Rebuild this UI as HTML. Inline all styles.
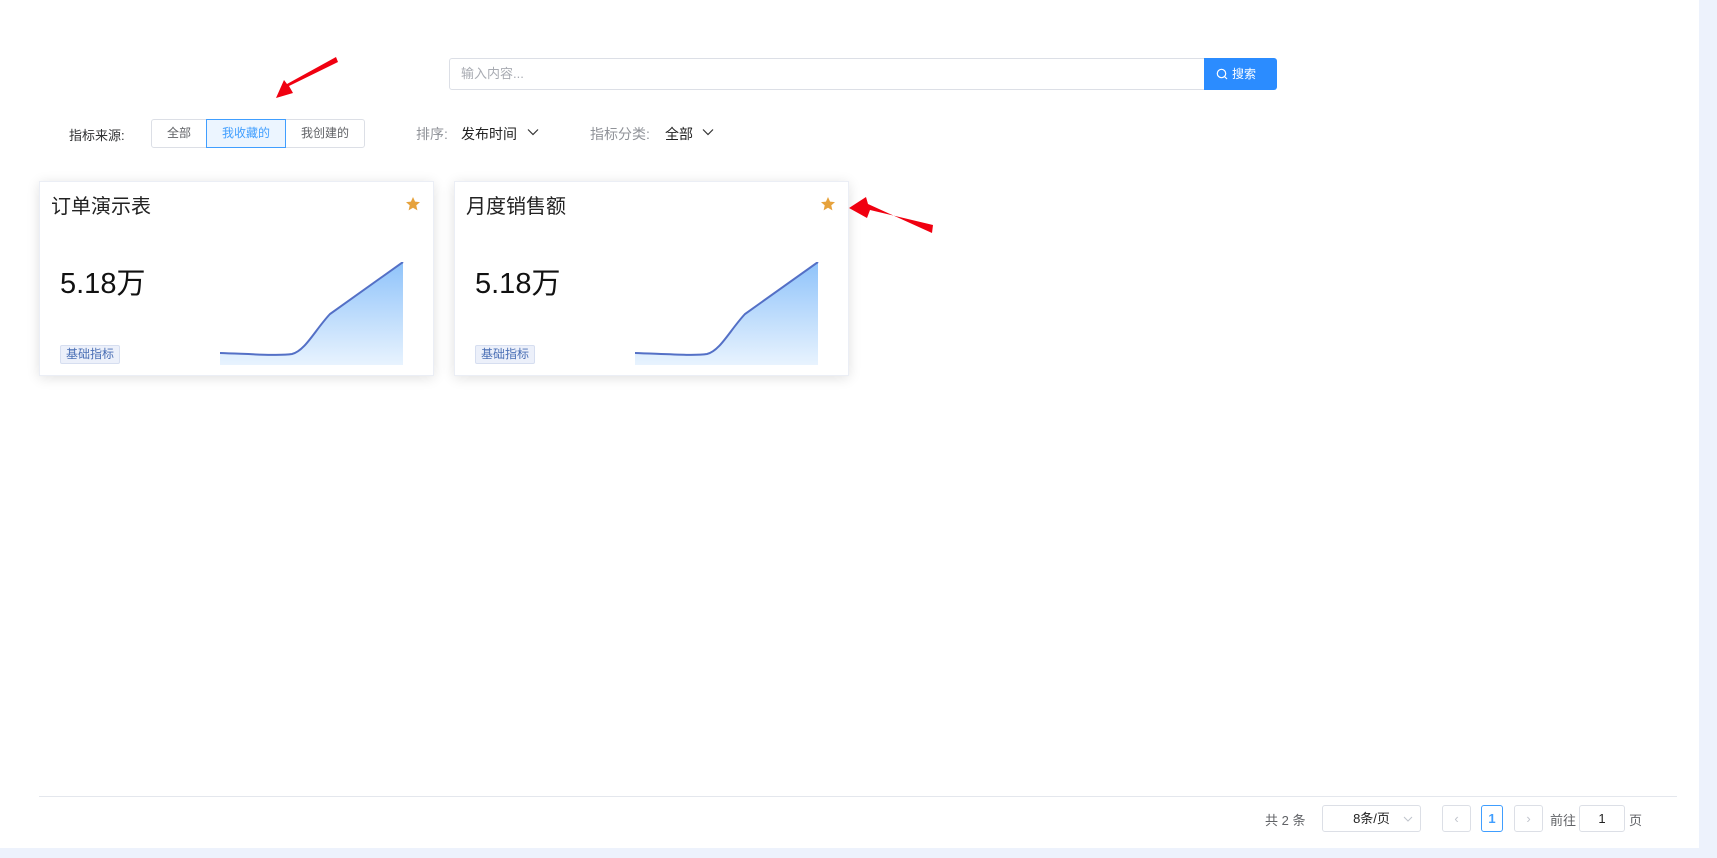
<!DOCTYPE html>
<html><head><meta charset="utf-8"><style>
*{margin:0;padding:0;box-sizing:border-box}
body{width:1717px;height:858px;background:#fff;position:relative;overflow:hidden;font-family:"Liberation Sans","Noto Sans CJK SC",sans-serif;color:#303133}
.a{position:absolute}
.card{position:absolute;top:181px;width:395px;height:195px;background:#fff;border:1px solid #ebeef5;box-shadow:0 2px 12px rgba(0,0,0,.12)}
.card .t{position:absolute;left:11px;top:8px;font-size:20px;color:#222}
.card .v{position:absolute;left:20px;top:78px;font-size:29px;color:#111}
.card .tag{position:absolute;left:20px;top:163px;height:19px;padding:0 5px;font-size:12px;line-height:17px;color:#4a6fb5;background:#ecf0fa;border:1px solid #d6def0;border-radius:2px}
.card svg.c{position:absolute;left:180px;top:80px}
.card .s{position:absolute;right:12px;top:14px}
.seg{position:absolute;top:119px;height:29px;border:1px solid #dcdfe6;font-size:12px;line-height:27px;text-align:center;color:#606266;background:#fff}
.pb{position:absolute;top:805px;height:27px;border:1px solid #dcdfe6;border-radius:3px;background:#fff;font-size:13px;text-align:center;line-height:25px}
</style></head><body>
<div class="a" style="left:449px;top:58px;width:756px;height:32px;border:1px solid #dcdfe6;border-radius:3px 0 0 3px;font-size:13px;color:#a8abb2;line-height:30px;padding-left:11px">输入内容...</div>
<div class="a" style="left:1204px;top:58px;width:73px;height:32px;background:#2b8cff;border-radius:0 3px 3px 0;color:#fff;font-size:12px;line-height:32px;padding-left:28px">搜索
<svg class="a" style="left:12px;top:10px" width="12" height="12" viewBox="0 0 12 12"><circle cx="5.5" cy="5.5" r="4.2" fill="none" stroke="#fff" stroke-width="1.2"/><path d="M8.5 8.5L11 11" stroke="#fff" stroke-width="1.2"/></svg></div>

<div class="a" style="left:69px;top:125px;font-size:13px;color:#303133">指标来源:</div>
<div class="seg" style="left:151px;width:56px;border-radius:3px 0 0 3px">全部</div>
<div class="seg" style="left:206px;width:80px;border-color:#409eff;background:#ecf5ff;color:#409eff;z-index:2">我收藏的</div>
<div class="seg" style="left:285px;width:80px;border-radius:0 3px 3px 0">我创建的</div>
<div class="a" style="left:416px;top:124px;font-size:14px;color:#909399">排序:</div>
<div class="a" style="left:461px;top:124px;font-size:14px;color:#222">发布时间</div>
<svg class="a" style="left:527px;top:128px" width="12" height="8" viewBox="0 0 12 8"><path d="M1 1.5L6 6.5L11 1.5" fill="none" stroke="#333" stroke-width="1.2"/></svg>
<div class="a" style="left:590px;top:124px;font-size:14px;color:#909399">指标分类:</div>
<div class="a" style="left:665px;top:124px;font-size:14px;color:#222">全部</div>
<svg class="a" style="left:702px;top:128px" width="12" height="8" viewBox="0 0 12 8"><path d="M1 1.5L6 6.5L11 1.5" fill="none" stroke="#333" stroke-width="1.2"/></svg>

<svg width="0" height="0" style="position:absolute"><defs><linearGradient id="g" x1="0" y1="0" x2="0" y2="1"><stop offset="0" stop-color="#8fc3fa"/><stop offset="1" stop-color="#e8f3fe"/></linearGradient></defs></svg>
<div class="card" style="left:39px">
<div class="t">订单演示表</div>
<svg class="s" width="16" height="16" viewBox="0 0 24 24"><path d="M12 1.5l3.1 7 7.4.6-5.6 5 1.7 7.4L12 17.6 5.4 21.5l1.7-7.4-5.6-5 7.4-.6z" fill="#e6a23c"/></svg>
<div class="v">5.18万</div>
<div class="tag">基础指标</div>
<svg class="c" width="184" height="104" viewBox="0 0 184 104"><path d="M0 91 C30 92 60 94 72 92 C85 89 95 68 110 52 L183 0 L183 103 L0 103Z" fill="url(#g)"/><path d="M0 91 C30 92 60 94 72 92 C85 89 95 68 110 52 L183 0" fill="none" stroke="#5470c6" stroke-width="2"/></svg>
</div>
<div class="card" style="left:454px">
<div class="t">月度销售额</div>
<svg class="s" width="16" height="16" viewBox="0 0 24 24"><path d="M12 1.5l3.1 7 7.4.6-5.6 5 1.7 7.4L12 17.6 5.4 21.5l1.7-7.4-5.6-5 7.4-.6z" fill="#e6a23c"/></svg>
<div class="v">5.18万</div>
<div class="tag">基础指标</div>
<svg class="c" width="184" height="104" viewBox="0 0 184 104"><path d="M0 91 C30 92 60 94 72 92 C85 89 95 68 110 52 L183 0 L183 103 L0 103Z" fill="url(#g)"/><path d="M0 91 C30 92 60 94 72 92 C85 89 95 68 110 52 L183 0" fill="none" stroke="#5470c6" stroke-width="2"/></svg>
</div>

<svg class="a" style="left:0;top:0" width="1717" height="858"><g fill="#f00010"><path d="M338 62 L289 86 L293 93 L276 98 L284 80 L287 84 L336 57Z"/><path d="M933 225 L870 210 L867 218 L849 208 L866 197 L868 204 L932 233Z"/></g></svg>

<div class="a" style="left:39px;top:796px;width:1638px;height:1px;background:#e4e7ed"></div>
<div class="a" style="left:1265px;top:810px;font-size:13px;color:#606266">共 2 条</div>
<div class="pb" style="left:1322px;width:99px;color:#222">8条/页<svg class="a" style="left:80px;top:10px" width="10" height="6" viewBox="0 0 10 6"><path d="M1 1L5 5L9 1" fill="none" stroke="#c0c4cc"/></svg></div>
<div class="pb" style="left:1442px;width:29px;color:#c0c4cc">‹</div>
<div class="pb" style="left:1481px;width:22px;border-color:#409eff;color:#409eff;font-weight:bold">1</div>
<div class="pb" style="left:1514px;width:29px;color:#c0c4cc">›</div>
<div class="a" style="left:1550px;top:810px;font-size:13px;color:#606266">前往</div>
<div class="pb" style="left:1579px;width:46px;color:#222">1</div>
<div class="a" style="left:1629px;top:810px;font-size:13px;color:#606266">页</div>

<div class="a" style="left:0;top:848px;width:1717px;height:10px;background:#edf2fc"></div>
<div class="a" style="left:1699px;top:0;width:18px;height:858px;background:#edf2fc"></div>
</body></html>
